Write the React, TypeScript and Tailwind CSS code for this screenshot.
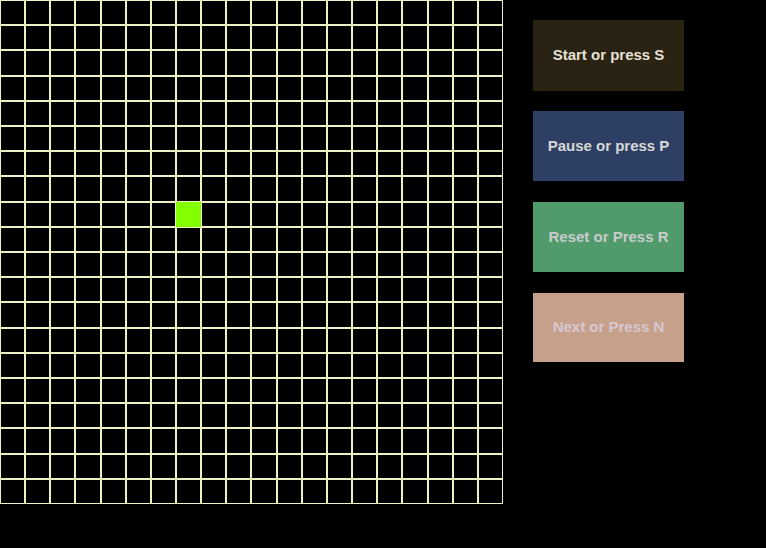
import { useEffect, useState } from 'react';

const SIZE = 20;

export default function App() {
  const [pos, setPos] = useState({ row: 8, col: 7 });
  const [running, setRunning] = useState(false);

  useEffect(() => {
    const onKey = (e: KeyboardEvent) => {
      const k = e.key.toLowerCase();
      if (k === 's') setRunning(true);
      if (k === 'p') setRunning(false);
      if (k === 'r') {
        setRunning(false);
        setPos({ row: 8, col: 7 });
      }
      if (k === 'n') setPos((p) => ({ ...p, col: (p.col + 1) % SIZE }));
    };
    window.addEventListener('keydown', onKey);
    return () => window.removeEventListener('keydown', onKey);
  }, []);

  useEffect(() => {
    if (!running) return;
    const t = setInterval(() => setPos((p) => ({ ...p, col: (p.col + 1) % SIZE })), 300);
    return () => clearInterval(t);
  }, [running]);

  return (
    <main className="w-[766px] h-[548px] bg-black flex items-start font-['Liberation_Sans',Arial,sans-serif]">
      {/* GRID */}
      <div className="grid grid-cols-[repeat(20,1fr)] grid-rows-[repeat(20,1fr)] w-[503px] h-[504px]">
        {[...Array(SIZE * SIZE)].map((_, i) => {
          const row = Math.floor(i / SIZE);
          const col = i % SIZE;
          const on = row === pos.row && col === pos.col;
          return (
            <div
              key={i}
              className={`border ${on ? 'bg-[#84ff00] border-[#84ff00]' : 'bg-black border-[#efefc4]'}`}
            />
          );
        })}
      </div>

      {/* BUTTONS */}
      <div className="ml-[30px] mt-[20px] flex flex-col w-[151px]">
        <button
          onClick={() => setRunning(true)}
          className="h-[71px] bg-[#2a2212] text-[#e6e0d6] text-[15px] font-bold"
        >
          Start or press S
        </button>
        <button
          onClick={() => setRunning(false)}
          className="mt-[20px] h-[70px] bg-[#2d3f65] text-[#d8d8d4] text-[15px] font-bold"
        >
          Pause or press P
        </button>
        <button
          onClick={() => {
            setRunning(false);
            setPos({ row: 8, col: 7 });
          }}
          className="mt-[21px] h-[70px] bg-[#509a6c] text-[#c8cccc] text-[15px] font-bold"
        >
          Reset or Press R
        </button>
        <button
          onClick={() => setPos((p) => ({ ...p, col: (p.col + 1) % SIZE }))}
          className="mt-[21px] h-[69px] bg-[#c7a08c] text-[#d6c8d0] text-[15px] font-bold"
        >
          Next or Press N
        </button>
      </div>
    </main>
  );
}
